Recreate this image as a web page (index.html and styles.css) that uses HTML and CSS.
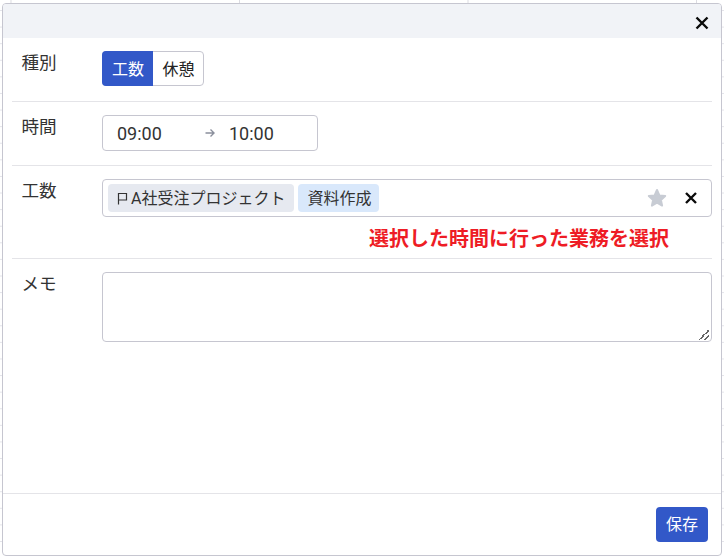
FILE: index.html
```html
<!DOCTYPE html>
<html lang="ja">
<head>
<meta charset="utf-8">
<title>工数</title>
<link rel="stylesheet" href="styles.css">
</head>
<body>
<div class="modal">
  <div class="modal-head">
    <button class="close" aria-label="閉じる">
      <svg viewBox="0 0 14 14" width="14" height="14"><path d="M1.5 1.5 12.5 12.5M12.5 1.5 1.5 12.5" class="x-stroke"/></svg>
    </button>
  </div>
  <div class="modal-body">
    <div class="row row-type">
      <div class="label">種別</div>
      <div class="control">
        <div class="toggle">
          <span class="toggle-item is-on">工数</span>
          <span class="toggle-item">休憩</span>
        </div>
      </div>
    </div>
    <div class="row row-time">
      <div class="label">時間</div>
      <div class="control">
        <div class="time">
          <span class="time-from">09:00</span>
          <svg class="arrow" viewBox="0 0 12 12" width="12" height="12"><path d="M1.5 6H10M6.5 2.5 10 6 6.5 9.5"/></svg>
          <span class="time-to">10:00</span>
        </div>
      </div>
    </div>
    <div class="row row-work">
      <div class="label">工数</div>
      <div class="control">
        <div class="select">
          <span class="tag tag-gray">
            <svg class="flag" viewBox="0 0 12 14" width="12" height="14"><path d="M1.5 13.5V2.5H9.5V9H1.5"/></svg>A社受注プロジェクト</span>
          <span class="tag tag-blue">資料作成</span>
          <span class="select-space"></span>
          <svg class="star" viewBox="0 0 20 20" width="20" height="20"><path d="M10 2 12.4 7.4 18.2 8 13.9 11.9 15.1 17.6 10 14.7 4.9 17.6 6.1 11.9 1.8 8 7.6 7.4Z"/></svg>
          <svg class="clear" viewBox="0 0 14 14" width="14" height="14"><path d="M2 2 12 12M12 2 2 12" class="x-stroke"/></svg>
        </div>
        <div class="notice">選択した時間に行った業務を選択</div>
      </div>
    </div>
    <div class="row row-memo">
      <div class="label">メモ</div>
      <div class="control">
        <textarea class="memo"></textarea>
      </div>
    </div>
  </div>
  <div class="modal-foot">
    <button class="save">保存</button>
  </div>
</div>
</body>
</html>
```
FILE: styles.css
```css
* { box-sizing: border-box; }
html, body { margin: 0; height: 100%; }
body {
  width: 724px;
  height: 556px;
  overflow: hidden;
  padding: 3px 2px 0 2px;
  background-color: #fff;
  background-image:
    linear-gradient(#e4e4ea 1px, transparent 1px),
    linear-gradient(90deg, #dcdce2 1px, transparent 1px);
  background-size: 100% 16.6px, 228.5px 100%;
  background-position: 0 10px, 10.5px 0;
  font-family: Roboto, "Noto Sans CJK JP", sans-serif;
  color: #333;
}
.modal {
  height: 553px;
  display: flex;
  flex-direction: column;
  background: #fff;
  border: 1px solid #c6c6d0;
  border-radius: 4px;
}
.modal-head {
  height: 34px;
  flex: none;
  display: flex;
  justify-content: flex-end;
  align-items: center;
  padding: 3px 12px 0 0;
  background: #f1f3f7;
  border-radius: 3px 3px 0 0;
}
.close { width: 14px; height: 14px; padding: 0; border: 0; background: none; display: flex; }
.x-stroke { stroke: #0a0a0a; stroke-width: 2.4; fill: none; }
.modal-body { flex: 1; padding: 0 9px; }
.row {
  display: flex;
  padding-top: 13px;
  border-bottom: 1px solid #e4e4e8;
}
.row-type { height: 64px; }
.row-time { height: 64px; }
.row-work { height: 93px; }
.row-memo { border-bottom: 0; }
.label {
  width: 90px;
  flex: none;
  padding-left: 9.5px;
  font-size: 17.6px;
  line-height: 25px;
  color: #333;
}
.control { flex: 1; min-width: 0; }
.toggle {
  display: inline-flex;
  height: 35px;
  border: 1px solid #c6c6d0;
  border-radius: 4px;
  font-size: 16px;
}
.toggle-item {
  width: 50px;
  display: flex;
  align-items: center;
  justify-content: center;
  padding: 0 0 2px 1px;
  color: #222;
}
.toggle-item.is-on {
  width: 51px;
  margin: -1px 0 -1px -1px;
  background: #3258c8;
  color: #fff;
  border-radius: 4px 0 0 4px;
}
.time {
  width: 216px;
  height: 36px;
  display: flex;
  align-items: center;
  border: 1px solid #c6c6d0;
  border-radius: 4px;
  padding-left: 14px;
  font-size: 18px;
}
.time-from { width: 87px; }
.arrow { fill: none; stroke: #8a8f9c; stroke-width: 1.4; margin-right: 13px; }
.select {
  height: 38px;
  display: flex;
  align-items: center;
  gap: 4px;
  padding: 0 13px 0 5px;
  border: 1px solid #c6c6d0;
  border-radius: 4px;
}
.tag {
  height: 28px;
  display: flex;
  align-items: center;
  padding: 0 9px 3px;
  border-radius: 4px;
  font-size: 16px;
}
.tag-gray { background: #e6e9f0; }
.tag-blue { background: #d9e8fb; padding-right: 8px; }
.flag { fill: none; stroke: #333; stroke-width: 1.2; margin: 3px 2px 0 0; }
.select-space { flex: 1; }
.star {
  fill: #c8ccd4;
  stroke: #c8ccd4;
  stroke-width: 2;
  stroke-linejoin: round;
  margin-right: 13px;
}
.notice {
  margin-top: 10px;
  padding-left: 267px;
  font-size: 20px;
  line-height: 24px;
  font-weight: 700;
  color: #ee1c25;
}
.memo {
  display: block;
  width: 100%;
  height: 70px;
  border: 1px solid #c6c6d0;
  border-radius: 4px;
  background: #fff;
}
.memo::-webkit-resizer {
  background: linear-gradient(135deg, transparent 45%, #666 45%, #666 55%, transparent 55%, transparent 74%, #666 74%, #666 84%, transparent 84%) 3px 4px / 10px 10px no-repeat;
}
.modal-foot {
  height: 62px;
  flex: none;
  display: flex;
  justify-content: flex-end;
  align-items: flex-start;
  padding: 13px 13px 0 0;
  border-top: 1px solid #e4e4e8;
}
.save {
  width: 52px;
  height: 35px;
  padding: 0 0 3px;
  border: 0;
  border-radius: 4px;
  background: #3258c8;
  color: #fff;
  font: 16px Roboto, "Noto Sans CJK JP", sans-serif;
}
```
